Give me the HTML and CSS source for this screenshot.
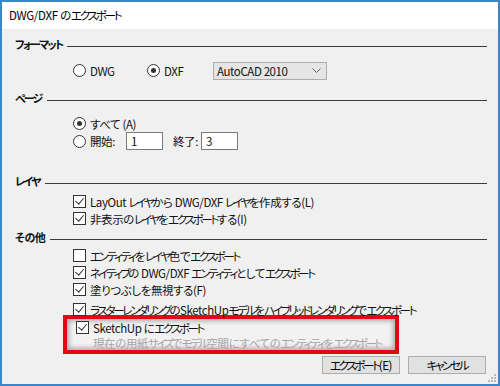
FILE: index.html
```html
<!DOCTYPE html>
<html lang="ja">
<head>
    <meta charset="UTF-8">
    <title>DWG/DXF のエクスポート</title>
    <link rel="stylesheet" href="styles.css">
</head>
<body>
<div class="window">
    <div class="titlebar">DWG/DXF の<span class="k">エクスポート</span></div>

    <div class="content">
        <!-- フォーマット -->
        <div class="group-head"><span class="k">フォーマット</span><div class="rule"></div></div>
        <div class="row format-row">
            <label class="opt opt-dwg"><span class="radio"></span>DWG</label>
            <label class="opt opt-dxf"><span class="radio on"></span>DXF</label>
            <div class="select">AutoCAD 2010
                <svg class="chevron" width="9" height="5" viewBox="0 0 9 5"><polyline points="0.5,0.5 4.5,4.5 8.5,0.5" fill="none" stroke="#666" stroke-width="1"/></svg>
            </div>
        </div>

        <!-- ページ -->
        <div class="group-head head-page"><span class="k">ページ</span><div class="rule"></div></div>
        <div class="row page-all">
            <label class="opt"><span class="radio on"></span>すべて (A)</label>
        </div>
        <div class="row page-range">
            <label class="opt opt-start"><span class="radio"></span>開始:</label>
            <div class="field">1</div>
            <span class="end-label">終了:</span>
            <div class="field">3</div>
        </div>

        <!-- レイヤ -->
        <div class="group-head head-layer"><span class="k">レイヤ</span><div class="rule"></div></div>
        <div class="row check-row first">
            <span class="check on"></span>
            <span class="label">LayOut <span class="k">レイヤ</span>から DWG/DXF <span class="k">レイヤ</span>を作成する(L)</span>
        </div>
        <div class="row check-row">
            <span class="check on"></span>
            <span class="label">非表示の<span class="k">レイヤ</span>を<span class="k">エクスポート</span>する(I)</span>
        </div>

        <!-- その他 -->
        <div class="group-head head-other"><span>その他</span><div class="rule"></div></div>
        <div class="row check-row first-other">
            <span class="check"></span>
            <span class="label"><span class="k">エンティティ</span>を<span class="k">レイヤ</span>色で<span class="k">エクスポート</span></span>
        </div>
        <div class="row check-row">
            <span class="check on"></span>
            <span class="label"><span class="k">ネイティブ</span>の DWG/DXF <span class="k">エンティティ</span>として<span class="k">エクスポート</span></span>
        </div>
        <div class="row check-row">
            <span class="check on"></span>
            <span class="label">塗りつぶしを無視する(F)</span>
        </div>
        <div class="row check-row raster">
            <span class="check on"></span>
            <span class="label"><span class="k">ラスターレンダリング</span>のSketchUp<span class="k">モデル</span>を<span class="k">ハイブリッドレンダリング</span>で<span class="k">エクスポート</span></span>
        </div>

        <div class="highlight">
            <div class="row check-row">
                <span class="check on"></span>
                <span class="label">SketchUp に<span class="k">エクスポート</span></span>
            </div>
            <div class="hint">現在の用紙<span class="k">サイズ</span>で<span class="k">モデル</span>空間にすべての<span class="k">エンティティ</span>を<span class="k">エクスポート</span></div>
        </div>

        <div class="buttons">
            <button class="btn"><span class="k">エクスポート</span>(E)</button>
            <button class="btn"><span class="k">キャンセル</span></button>
        </div>
    </div>

    <svg class="grip" width="8" height="8" viewBox="0 0 8 8">
        <rect x="6" y="0" width="2" height="2" fill="#b8b8b8"/>
        <rect x="3" y="3" width="2" height="2" fill="#b8b8b8"/>
        <rect x="6" y="3" width="2" height="2" fill="#b8b8b8"/>
        <rect x="0" y="6" width="2" height="2" fill="#b8b8b8"/>
        <rect x="3" y="6" width="2" height="2" fill="#b8b8b8"/>
        <rect x="6" y="6" width="2" height="2" fill="#b8b8b8"/>
    </svg>
</div>
</body>
</html>
```

FILE: styles.css
```css
body {
    margin: 0;
    background-color: #ffffff;
    font-family: "Noto Sans CJK JP", "Noto Sans", sans-serif;
    color: #000;
}

/* ウィンドウ枠 */
.window {
    position: relative;
    width: 500px;
    height: 386px;
    box-sizing: border-box;
    border: 2px solid #3b86c6;
    background-color: #f0f0f0;
    overflow: hidden;
}

.titlebar {
    height: 27px;
    line-height: 27px;
    padding-left: 7px;
    background-color: #ffffff;
    font-size: 11.5px;
    font-feature-settings: "palt";
    letter-spacing: -0.3px;
}

.content {
    padding: 8px 11px 0 13px;
    font-size: 11.5px;
    font-feature-settings: "palt";
    letter-spacing: -0.4px;
    color: #111;
}

/* カタカナは Meiryo UI 風に詰める */
.k {
    letter-spacing: -2.3px;
}

.titlebar .k {
    letter-spacing: -2.2px;
}

/* 見出し + 線 */
.group-head {
    display: flex;
    align-items: center;
    height: 14px;
    font-weight: bold;
    font-size: 11px;
}

.group-head .k {
    letter-spacing: -1.8px;
}

.rule {
    flex: 1;
    height: 1px;
    background-color: #3c3c3c;
    margin: 5px 0 0 5px;
}

.head-page { margin-top: 11px; }
.head-layer { margin-top: 24px; }
.head-other { margin-top: 3px; }

.row {
    display: flex;
    align-items: center;
    margin-left: 58px;
    white-space: nowrap;
}

.opt {
    display: flex;
    align-items: center;
}

.radio {
    width: 11px;
    height: 11px;
    border: 1px solid #333;
    border-radius: 50%;
    background-color: #fff;
    margin-right: 4px;
    position: relative;
    flex-shrink: 0;
}

.radio.on::after {
    content: "";
    position: absolute;
    left: 3px;
    top: 3px;
    width: 5px;
    height: 5px;
    border-radius: 50%;
    background-color: #333;
}

.format-row {
    height: 19px;
    margin-top: 10px;
}

.opt-dwg { width: 74px; }
.opt-dxf { width: 66px; }

.select {
    width: 114px;
    height: 18px;
    box-sizing: border-box;
    border: 1px solid #adadad;
    background-color: #e5e5e5;
    padding-left: 3px;
    display: flex;
    align-items: center;
    justify-content: space-between;
    padding-right: 5px;
}

.page-all {
    height: 17px;
    margin-top: 10px;
}

.page-range {
    height: 18px;
}

.opt-start { width: 53px; }

.field {
    width: 37px;
    height: 18px;
    box-sizing: border-box;
    border: 1px solid #7a7a7a;
    background-color: #fff;
    padding-left: 4px;
    line-height: 16px;
}

.end-label {
    margin: 0 3px 0 10px;
}

/* チェックボックス */
.check-row {
    height: 17px;
}

.check-row.first { margin-top: 5px; }
.check-row.first-other { margin-top: 3px; }
.check-row.raster { margin-top: 3px; }

.check {
    width: 11px;
    height: 11px;
    border: 1px solid #333;
    background-color: #fff;
    margin-right: 4px;
    position: relative;
    flex-shrink: 0;
}

.check.on::after {
    content: "";
    position: absolute;
    left: 3px;
    top: 0px;
    width: 4px;
    height: 7px;
    border-right: 1px solid #333;
    border-bottom: 1px solid #333;
    transform: rotate(40deg);
}

/* 赤枠 */
.highlight {
    margin: -3px 0 0 48px;
    width: 336px;
    box-sizing: border-box;
    border: 4px solid #e30613;
    box-shadow: inset 0 0 5px 2px rgba(0, 0, 0, 0.3);
    background-color: #f2f2f2;
}

.highlight .check-row {
    margin-left: 9px;
}

.hint {
    height: 14px;
    line-height: 14px;
    padding-left: 26px;
    color: #a6a6a6;
    white-space: nowrap;
}

.hint .k {
    letter-spacing: -2.6px;
}

/* ボタン */
.buttons {
    display: flex;
    justify-content: flex-end;
    gap: 8px;
    margin-top: 2px;
    padding-right: 1px;
}

.btn {
    width: 78px;
    height: 18px;
    padding: 0;
    border: 1px solid #adadad;
    background-color: #e1e1e1;
    font-family: inherit;
    font-size: 11.5px;
    font-feature-settings: "palt";
    letter-spacing: -0.4px;
    color: #000;
}

.grip {
    position: absolute;
    right: 2px;
    bottom: 2px;
}
```
